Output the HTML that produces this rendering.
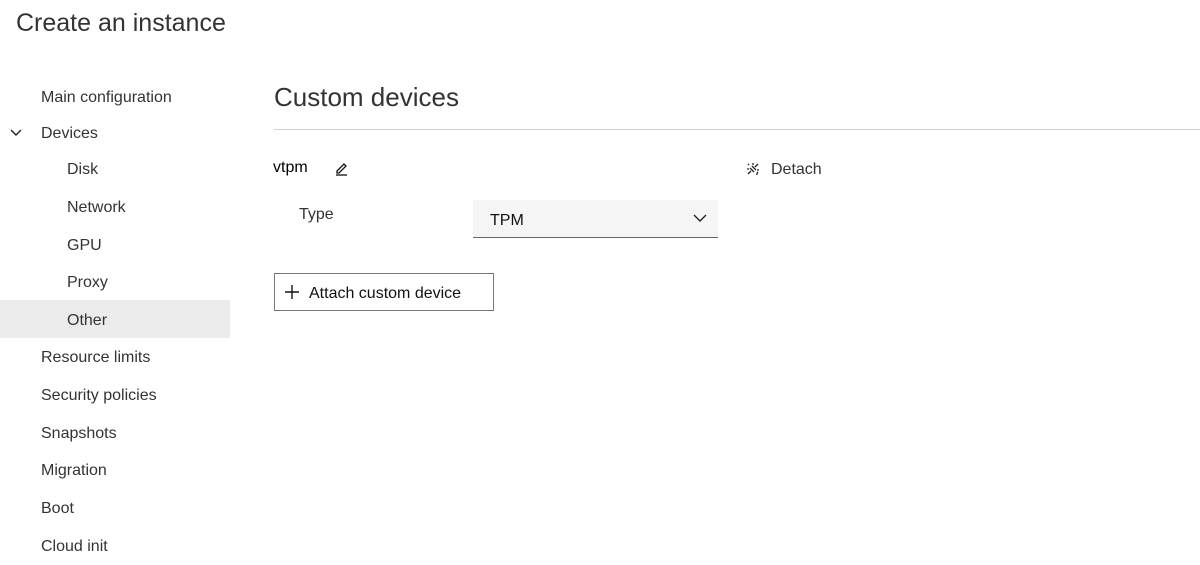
<!DOCTYPE html>
<html><head><meta charset="utf-8"><style>
*{margin:0;padding:0;box-sizing:border-box}
body{width:1200px;height:565px;background:#fff;font-family:"Liberation Sans",sans-serif;color:#111;position:relative;overflow:hidden}
.a{position:absolute;white-space:nowrap}
.nav{font-size:16px;color:#333;line-height:20px}
</style></head><body>
<div class="a" style="left:16px;top:9px;font-size:25px;font-weight:300;color:#333">Create an instance</div>

<div class="a" style="left:0;top:300px;width:230px;height:38px;background:#ebebeb"></div>
<div class="a nav" style="left:41px;top:88px">Main configuration</div>
<svg class="a" style="left:9px;top:128px" width="14" height="10" viewBox="0 0 14 10"><path d="M2 2l5 5 5-5" fill="none" stroke="#222" stroke-width="1.4"/></svg>
<div class="a nav" style="left:41px;top:124px">Devices</div>
<div class="a nav" style="left:67px;top:160px">Disk</div>
<div class="a nav" style="left:67px;top:198px">Network</div>
<div class="a nav" style="left:67px;top:236px">GPU</div>
<div class="a nav" style="left:67px;top:273px">Proxy</div>
<div class="a nav" style="left:67px;top:311px">Other</div>
<div class="a nav" style="left:41px;top:348px">Resource limits</div>
<div class="a nav" style="left:41px;top:386px">Security policies</div>
<div class="a nav" style="left:41px;top:424px">Snapshots</div>
<div class="a nav" style="left:41px;top:461px">Migration</div>
<div class="a nav" style="left:41px;top:499px">Boot</div>
<div class="a nav" style="left:41px;top:537px">Cloud init</div>

<div class="a" style="left:274px;top:82px;font-size:26px;font-weight:300;color:#333">Custom devices</div>
<div class="a" style="left:274px;top:129px;width:926px;height:1px;background:#d0d0d0"></div>

<div class="a" style="left:273px;top:159px;font-size:16px;color:#000">vtpm</div>
<svg class="a" style="left:334px;top:160px" width="16" height="16" viewBox="0 0 16 16"><path d="M3 11l7-7 2 2-7 7H3z" fill="none" stroke="#111" stroke-width="1.3"/><path d="M2 15h11" stroke="#111" stroke-width="1.3"/></svg>

<svg class="a" style="left:744px;top:160px" width="18" height="18" viewBox="0 0 18 18" fill="none" stroke="#222" stroke-width="1.3"><path d="M4 14l3-3M11 7l3-3M6 8l4 4M8 6l4 4M9 3v2M3 9h2M13 13v2M13 10h2M4 4l1 1M13 12l1 1"/></svg>
<div class="a" style="left:771px;top:161px;font-size:16px;color:#333">Detach</div>

<div class="a" style="left:299px;top:206px;font-size:16px;color:#333">Type</div>
<div class="a" style="left:473px;top:200px;width:245px;height:38px;background:#f5f5f5;border-bottom:1px solid #666"></div>
<div class="a" style="left:490px;top:212px;font-size:16px;color:#111">TPM</div>
<svg class="a" style="left:692px;top:212px" width="16" height="12" viewBox="0 0 16 12"><path d="M2 3l6 6 6-6" fill="none" stroke="#222" stroke-width="1.4"/></svg>

<div class="a" style="left:274px;top:273px;width:220px;height:38px;border:1px solid #777"></div>
<svg class="a" style="left:284px;top:284px" width="16" height="16" viewBox="0 0 16 16"><path d="M8 1v14M1 8h14" stroke="#111" stroke-width="1.4"/></svg>
<div class="a" style="left:309px;top:285px;font-size:16px;color:#111">Attach custom device</div>
</body></html>
